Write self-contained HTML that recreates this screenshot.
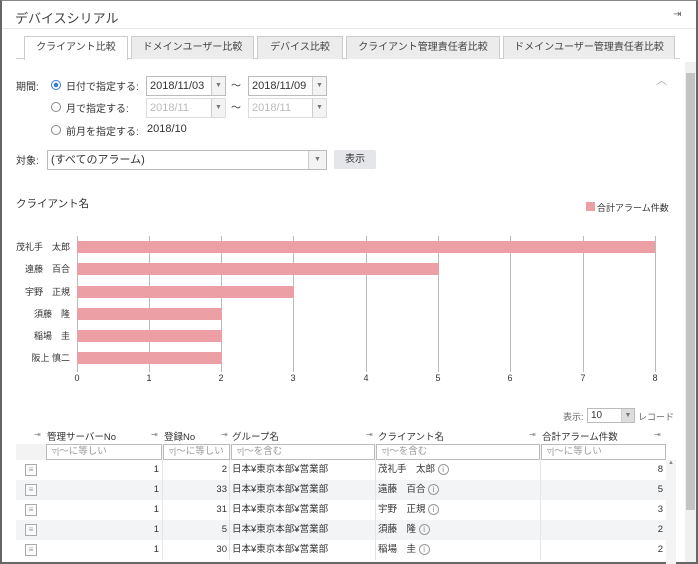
<!DOCTYPE html>
<html><head><meta charset="utf-8"><style>
*{box-sizing:border-box;margin:0;padding:0}
body{width:698px;height:564px;overflow:hidden;background:#fff;font-family:"Liberation Sans","Noto Sans CJK JP",sans-serif;font-size:10px;color:#333;position:relative}
.a{position:absolute}
.frame{left:0;top:0;width:698px;height:564px;border:2px solid #666;border-top:1px solid #888}
.tab{top:36px;height:23px;border:1px solid #ccc;border-bottom:none;background:#ececec;font-size:10px;text-align:center;line-height:21px;color:#444}
.sel{height:20px;border:1px solid #bbb;background:#fff;font-size:11px;line-height:18px;padding-left:3px}
.sel i{position:absolute;right:0;top:0;width:14px;height:18px;border-left:1px solid #ccc;background:#f3f3f3;font-style:normal;font-size:7px;text-align:center;color:#777}
.dis{color:#bbb;border-color:#ddd}
.rad{width:10px;height:10px;border:1px solid #888;border-radius:50%}
.grid{top:236px;width:1px;height:136px;background:#bbb}
.bar{left:77px;height:12px;background:#eca0a6}
.yl{left:0;width:70px;text-align:right;font-size:9px}
.xl{top:373px;font-size:9px;width:10px;text-align:center}
.cell{height:20px;line-height:20px;font-size:9.5px;border-right:1px solid #e4e4e4}
.fl{height:16px;border:1px solid #bbb;background:#fff;font-size:9.5px;color:#999;padding-left:5px;line-height:14px;overflow:hidden;white-space:nowrap}
.hd{font-size:9.5px}
.pin{font-size:8px;color:#888}
</style></head><body>
<div class="a frame"></div>
<div class="a" style="left:15px;top:8px;font-size:13px;color:#444">デバイスシリアル</div>
<div class="a" style="left:673px;top:9px;font-size:10px;color:#666">⇥</div>
<div class="a" style="left:3px;top:28px;width:692px;height:1px;background:#e6e6e6"></div>
<div class="a" style="left:16px;top:58px;width:664px;height:1px;background:#ccc"></div>
<div class="a tab" style="left:24px;width:104px;background:#fff;height:24px">クライアント比較</div>
<div class="a tab" style="left:131px;width:123px">ドメインユーザー比較</div>
<div class="a tab" style="left:257px;width:86px">デバイス比較</div>
<div class="a tab" style="left:346px;width:154px">クライアント管理責任者比較</div>
<div class="a tab" style="left:503px;width:172px">ドメインユーザー管理責任者比較</div>
<div class="a" style="left:685px;top:62px;width:11px;height:500px;background:#f0f0f0"></div>
<div class="a" style="left:686px;top:73px;width:9px;height:437px;background:#c4c4c4"></div>
<div class="a" style="left:656px;top:72px;color:#aaa;font-size:11px">︿</div>
<div class="a" style="left:16px;top:78px">期間:</div>
<div class="a rad" style="left:51px;top:80px;border-color:#3a7bd5;background:radial-gradient(#3a7bd5 35%,#fff 45%)"></div>
<div class="a" style="left:66px;top:78px">日付で指定する:</div>
<div class="a sel" style="left:146px;top:76px;width:80px">2018/11/03<i>▼</i></div>
<div class="a" style="left:231px;top:77px">～</div>
<div class="a sel" style="left:248px;top:76px;width:79px">2018/11/09<i>▼</i></div>
<div class="a rad" style="left:51px;top:102px"></div>
<div class="a" style="left:66px;top:100px">月で指定する:</div>
<div class="a sel dis" style="left:146px;top:98px;width:80px">2018/11<i>▼</i></div>
<div class="a" style="left:231px;top:99px">～</div>
<div class="a sel dis" style="left:248px;top:98px;width:79px">2018/11<i>▼</i></div>
<div class="a rad" style="left:51px;top:125px"></div>
<div class="a" style="left:66px;top:123px">前月を指定する:</div>
<div class="a" style="left:147px;top:123px;font-size:11px">2018/10</div>
<div class="a" style="left:16px;top:152px">対象:</div>
<div class="a sel" style="left:47px;top:150px;width:280px">(すべてのアラーム)<i style="width:18px">▼</i></div>
<div class="a" style="left:334px;top:150px;width:42px;height:19px;background:#e4e6e9;border-radius:2px;text-align:center;line-height:19px;font-size:10px">表示</div>
<div class="a" style="left:16px;top:196px;font-size:10.5px">クライアント名</div>
<div class="a" style="left:586px;top:202px;width:9px;height:9px;background:#eca0a6"></div>
<div class="a" style="left:597px;top:201px;font-size:9px">合計アラーム件数</div>
<div class="a grid" style="left:77px"></div>
<div class="a grid" style="left:149px"></div>
<div class="a grid" style="left:221px"></div>
<div class="a grid" style="left:293px"></div>
<div class="a grid" style="left:366px"></div>
<div class="a grid" style="left:438px"></div>
<div class="a grid" style="left:510px"></div>
<div class="a grid" style="left:583px"></div>
<div class="a grid" style="left:655px"></div>
<div class="a bar" style="top:241px;width:578px"></div>
<div class="a bar" style="top:263px;width:362px"></div>
<div class="a bar" style="top:286px;width:217px"></div>
<div class="a bar" style="top:308px;width:145px"></div>
<div class="a bar" style="top:330px;width:145px"></div>
<div class="a bar" style="top:352px;width:145px"></div>
<div class="a yl" style="top:240px">茂礼手　太郎</div>
<div class="a yl" style="top:262px">遠藤　百合</div>
<div class="a yl" style="top:285px">宇野　正規</div>
<div class="a yl" style="top:307px">須藤　隆</div>
<div class="a yl" style="top:329px">稲場　圭</div>
<div class="a yl" style="top:351px">阪上 慎二</div>
<div class="a xl" style="left:72px">0</div><div class="a xl" style="left:144px">1</div><div class="a xl" style="left:216px">2</div><div class="a xl" style="left:288px">3</div><div class="a xl" style="left:361px">4</div><div class="a xl" style="left:433px">5</div><div class="a xl" style="left:505px">6</div><div class="a xl" style="left:578px">7</div><div class="a xl" style="left:650px">8</div>
<div class="a" style="left:563px;top:410px;font-size:9px;color:#666">表示:</div>
<div class="a sel" style="left:587px;top:408px;width:48px;height:15px;line-height:13px;font-size:10px">10<i style="height:13px;width:13px;background:#ddd">▼</i></div>
<div class="a" style="left:638px;top:410px;font-size:9px;color:#666">レコード</div>
<div class="a" style="left:16px;top:444px;width:650px;height:17px;background:#f3f3f3"></div>
<div class="a pin" style="left:34px;top:430px">⇥</div>
<div class="a hd" style="left:47px;top:429px">管理サーバーNo</div>
<div class="a pin" style="left:151px;top:430px">⇥</div>
<div class="a hd" style="left:164px;top:429px">登録No</div>
<div class="a pin" style="left:221px;top:430px">⇥</div>
<div class="a hd" style="left:232px;top:429px">グループ名</div>
<div class="a pin" style="left:366px;top:430px">⇥</div>
<div class="a hd" style="left:378px;top:429px">クライアント名</div>
<div class="a pin" style="left:529px;top:430px">⇥</div>
<div class="a hd" style="left:542px;top:429px">合計アラーム件数</div>
<div class="a pin" style="left:654px;top:430px">⇥</div>
<div class="a fl" style="left:46px;top:444px;width:116px">▿|～に等しい</div>
<div class="a fl" style="left:163px;top:444px;width:67px">▿|～に等しい</div>
<div class="a fl" style="left:231px;top:444px;width:144px">▿|～を含む</div>
<div class="a fl" style="left:376px;top:444px;width:164px">▿|～を含む</div>
<div class="a fl" style="left:541px;top:444px;width:125px">▿|～に等しい</div>
<div class="a" style="left:666px;top:460px;width:10px;height:104px;background:#f4f4f4;font-size:6px;color:#888;text-align:center">▲</div>
<div id="rows"></div>
<script>
var d=[["2","茂礼手　太郎","8"],["33","遠藤　百合","5"],["31","宇野　正規","3"],["5","須藤　隆","2"],["30","稲場　圭","2"]];
var h="";
d.forEach(function(r,i){var t=460+i*20;var bg=i%2?"#f3f4f6":"#fff";
h+='<div class="a" style="left:16px;top:'+t+'px;width:650px;height:20px;background:'+bg+'"></div>';
h+='<div class="a" style="left:25px;top:'+(t+4)+'px;width:12px;height:12px;border:1px solid #aaa;background:#fafafa;font-size:8px;line-height:10px;text-align:center;color:#999">≡</div>';
h+='<div class="a cell" style="left:46px;top:'+t+'px;width:117px;text-align:right;padding-right:3px">1</div>';
h+='<div class="a cell" style="left:163px;top:'+t+'px;width:67px;text-align:right;padding-right:2px">'+r[0]+'</div>';
h+='<div class="a cell" style="left:230px;top:'+t+'px;width:146px;padding-left:2px">日本¥東京本部¥営業部</div>';
h+='<div class="a cell" style="left:376px;top:'+t+'px;width:165px;padding-left:2px">'+r[1]+' <span style="display:inline-block;width:11px;height:11px;border:1px solid #999;border-radius:50%;font-size:8px;line-height:9px;text-align:center;color:#888">i</span></div>';
h+='<div class="a cell" style="left:541px;top:'+t+'px;width:125px;text-align:right;padding-right:3px;border:none">'+r[2]+'</div>';});
document.getElementById("rows").innerHTML=h;
</script>
</body></html>
